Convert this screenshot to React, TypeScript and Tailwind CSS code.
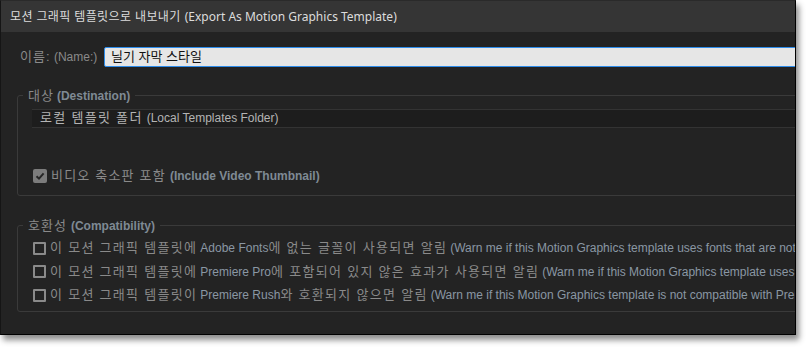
const ko = "font-['Liberation_Sans','Noto_Sans_CJK_KR',sans-serif]";

function Box({ checked }: { checked?: boolean }) {
  if (checked) {
    return (
      <span className="w-[14px] h-[14px] rounded-[2px] bg-[#7c7c7c] flex items-center justify-center shrink-0">
        <svg width="10" height="10" viewBox="0 0 10 10">
          <path d="M1.5 5.2 L4 7.6 L8.6 2.4" fill="none" stroke="#262626" strokeWidth="2" />
        </svg>
      </span>
    );
  }
  return <span className="w-[13px] h-[13px] border-2 border-[#8a8a8a] rounded-[1px] shrink-0" />;
}

const rows = [
  { a: "이 모션 그래픽 템플릿에", b: "Adobe Fonts", c: "에 없는 글꼴이 사용되면 알림", d: "(Warn me if this Motion Graphics template uses fonts that are not available in Adobe Fonts)" },
  { a: "이 모션 그래픽 템플릿에", b: "Premiere Pro", c: "에 포함되어 있지 않은 효과가 사용되면 알림", d: "(Warn me if this Motion Graphics template uses effects that are not included in Premiere Pro)" },
  { a: "이 모션 그래픽 템플릿이", b: "Premiere Rush", c: "와 호환되지 않으면 알림", d: "(Warn me if this Motion Graphics template is not compatible with Premiere Rush)" },
];

export default function App() {
  return (
    <div className="w-[808px] h-[357px] bg-white overflow-hidden">
      <div className="w-[796px] h-[335px] flex flex-col overflow-hidden border-r border-b border-l border-t border-r-black border-b-black border-l-[#151515] border-t-[#2a2a2a] shadow-[3px_5px_6px_rgba(0,0,0,0.45)] bg-[#232323]">
        {/* Title bar */}
        <div className="h-[31px] bg-[#353535] flex items-center px-[9px] text-[12px] text-[#dcdcdc] whitespace-nowrap font-['Noto_Sans','Noto_Sans_CJK_KR',sans-serif]">
          <span className="tracking-[0.4px]">모션 그래픽 템플릿으로 내보내기</span>
          <span className="ml-[4px]">(Export As Motion Graphics Template)</span>
        </div>

        <div className={`flex flex-col ${ko} text-[12px] whitespace-nowrap`}>
          {/* Name */}
          <div className="flex items-center mt-[15px] h-[20px]">
            <span className="ml-[19px] w-[84px] text-[#8a8a8a]">
              <span className="text-[13px] tracking-[1px]">이름:</span> (Name:)
            </span>
            <div className="flex-1 -mr-[20px] h-[20px] bg-[#e6e6e6] border border-[#2d8ceb] rounded-l-[2px] flex items-center pl-[6px] text-[13px] text-[#111]">
              닐기 자막 스타일
            </div>
          </div>

          {/* Destination */}
          <fieldset className="ml-[16px] -mr-[40px] mt-[19px] border border-[#3a3a3a] rounded-[3px] pb-[11px]">
            <legend className="ml-[5px] px-[5px] text-[#8a8a8a]">
              <span className="text-[13px] tracking-[1px]">대상</span>
              <span className="ml-[3px] font-bold text-[#7f8a94] text-[12px]">(Destination)</span>
            </legend>
            <div className="ml-[14px] mt-[3px] h-[19px] bg-[#1d1d1d] border-y border-[#333] flex items-center pl-[8px] text-[#b4b4b4]">
              <span className="text-[13px] tracking-[1.3px]">로컬 템플릿 폴더</span>
              <span className="ml-[4px]">(Local Templates Folder)</span>
            </div>
            <div className="ml-[15px] mt-[40px] flex items-center gap-[4px] h-[16px] text-[#8a8a8a]">
              <Box checked />
              <span className="text-[13px] tracking-[1.2px]">비디오 축소판 포함</span>
              <span className="font-bold text-[#7f8a94] text-[12px]">(Include Video Thumbnail)</span>
            </div>
          </fieldset>

          {/* Compatibility */}
          <fieldset className="ml-[16px] -mr-[40px] mt-[20px] border border-[#3a3a3a] rounded-[3px] pb-[8px]">
            <legend className="ml-[5px] px-[5px] text-[#8a8a8a]">
              <span className="text-[13px] tracking-[1px]">호환성</span>
              <span className="ml-[4px] font-bold text-[#7f8a94] text-[12px]">(Compatibility)</span>
            </legend>
            <div className="flex flex-col gap-[7.5px] mt-[5px]">
              {rows.map((r) => (
                <div key={r.b} className="ml-[15px] flex items-center h-[16px] text-[#8a8a8a]">
                  <Box />
                  <span className="ml-[4px] text-[13px] tracking-[1.3px]">{r.a}</span>
                  <span className="ml-[3px] text-[#8a97a3]">{r.b}</span>
                  <span className="text-[13px] tracking-[1.3px]">{r.c}</span>
                  <span className="ml-[3px] text-[#8a97a3]">{r.d}</span>
                </div>
              ))}
            </div>
          </fieldset>
        </div>
      </div>
    </div>
  );
}
